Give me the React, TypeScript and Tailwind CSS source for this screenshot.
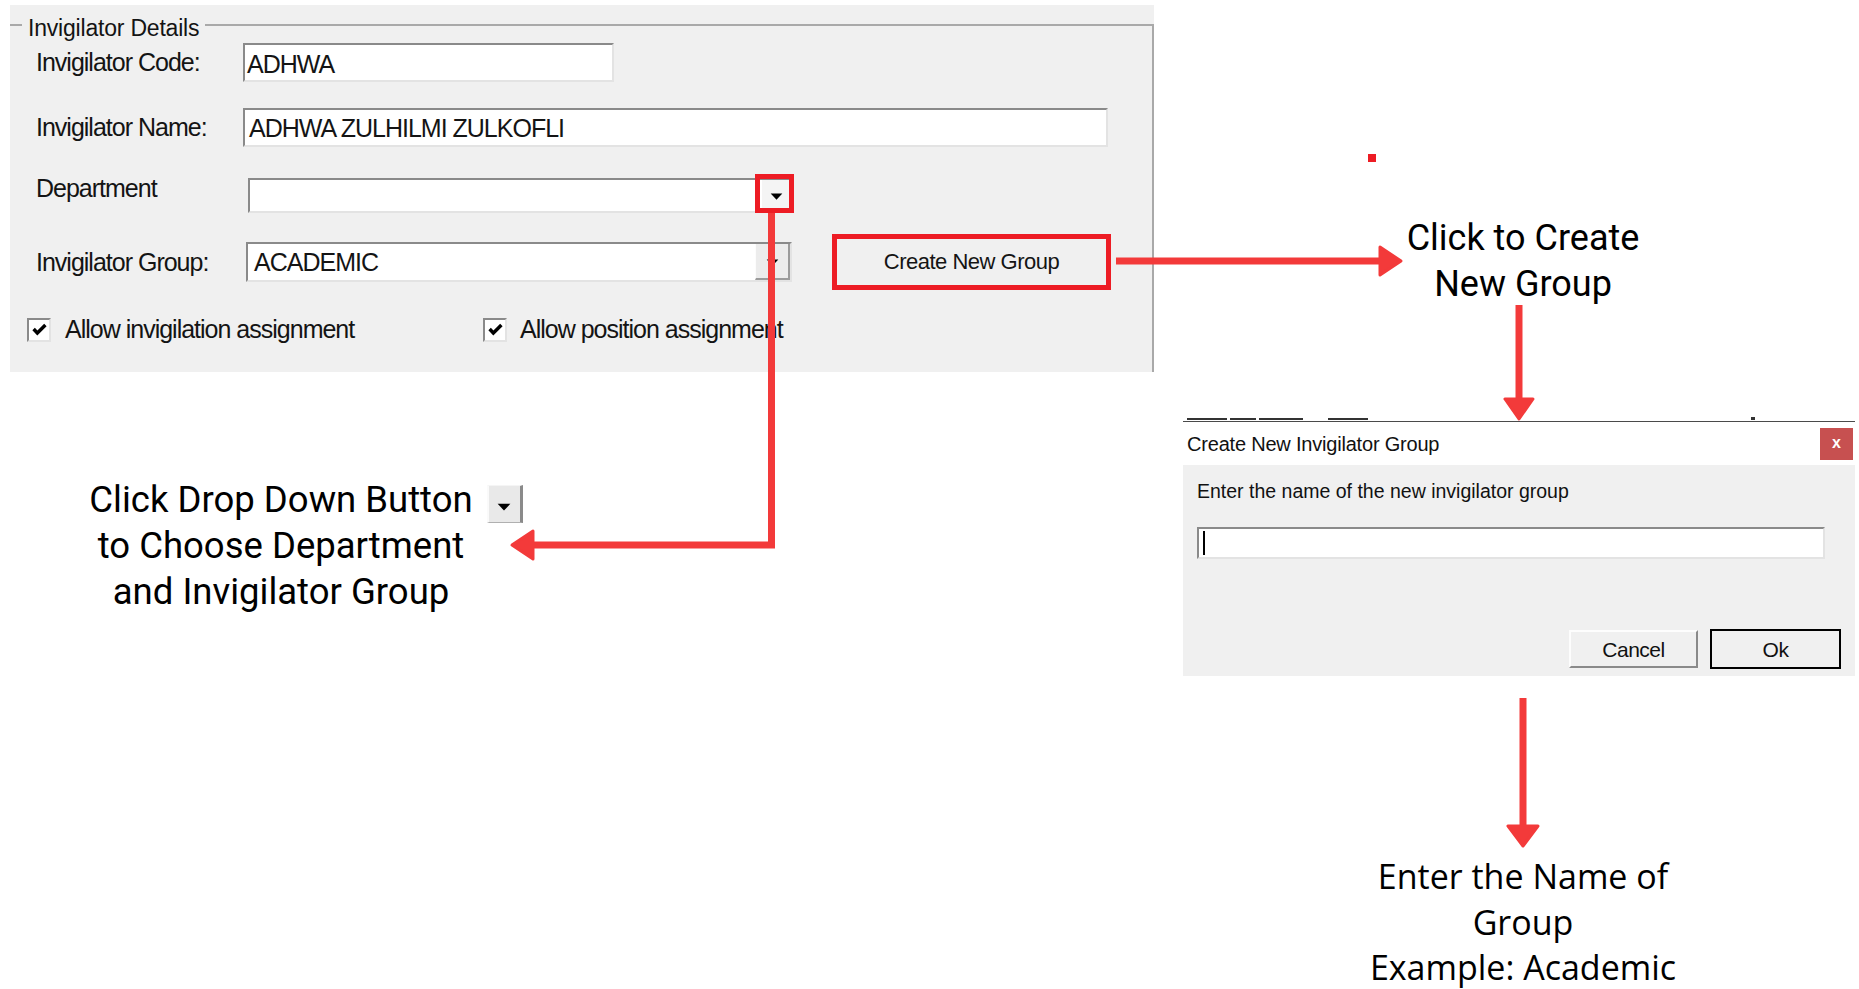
import React from 'react'

const sunken =
  'border-2 border-t-[#8a8a8a] border-l-[#8a8a8a] border-r-[#e3e3e3] border-b-[#e3e3e3] bg-white'

function Caret({ w = 13, h = 7 }: { w?: number; h?: number }): JSX.Element {
  return (
    <svg width={w} height={h} viewBox="0 0 11 6">
      <path d="M0.5 0.5h10L5.5 5.8z" fill="#000" />
    </svg>
  )
}

function CheckBox(): JSX.Element {
  return (
    <div className={`w-[24px] h-[24px] shrink-0 flex items-center justify-center ${sunken}`}>
      <svg width="15" height="13" viewBox="0 0 14 12">
        <path d="M1.5 5.5 L5 9.2 L12.5 1.8" stroke="#000" strokeWidth="3.2" fill="none" />
      </svg>
    </div>
  )
}

function Panel(): JSX.Element {
  const label = 'text-[25px] tracking-[-1px] leading-none'
  return (
    <div className="ml-[10px] mt-[5px] w-[1144px] h-[367px] shrink-0 bg-[#f0f0f0] pt-[19px] text-[#141414]">
      <div className="relative h-[348px] border-t-2 border-r-2 border-[#a9a9a9]">
        <span className="absolute -top-[9px] left-[12px] bg-[#f0f0f0] px-[6px] text-[23px] tracking-[-0.2px] leading-none">
          Invigilator Details
        </span>

        {/* code */}
        <div className="mt-[17px] h-[39px] flex items-center">
          <div className={`w-[233px] pl-[26px] ${label}`}>Invigilator Code:</div>
          <div className={`w-[371px] h-full flex items-center pl-[2px] pt-[3px] ${sunken} ${label}`}>ADHWA</div>
        </div>

        {/* name */}
        <div className="mt-[26px] h-[39px] flex items-center">
          <div className={`w-[233px] pl-[26px] ${label}`}>Invigilator Name:</div>
          <div className={`w-[865px] h-full flex items-center pl-[4px] pt-[1px] ${sunken} ${label}`}>
            ADHWA ZULHILMI ZULKOFLI
          </div>
        </div>

        {/* department */}
        <div className="mt-[31px] h-[35px] flex items-start">
          <div className={`w-[233px] pl-[26px] -mt-[2px] ${label}`}>Department</div>
          <div className={`ml-[5px] w-[544px] h-full flex ${sunken}`}>
            <div className="flex-1" />
            <div className="w-[28px] h-full bg-[#f4f4f4] flex items-center justify-center pt-[2px]">
              <Caret />
            </div>
          </div>
        </div>

        {/* group */}
        <div className="mt-[29px] h-[40px] flex items-center">
          <div className={`w-[233px] pl-[26px] ${label}`}>Invigilator Group:</div>
          <div className={`ml-[3px] w-[546px] h-full flex ${sunken}`}>
            <div className={`flex-1 flex items-center pl-[6px] ${label}`}>ACADEMIC</div>
            <div className="w-[35px] h-full bg-[#ececec] border-l border-l-[#fcfcfc] border-r-2 border-r-[#9b9b9b] border-b-2 border-b-[#9b9b9b] flex items-center justify-center pt-[2px]">
              <Caret />
            </div>
          </div>
          <button className="ml-[40px] w-[279px] h-[56px] shrink-0 border-[5px] border-[#ed1c24] bg-[#f0f0f0] text-[22px] tracking-[-0.5px] leading-none text-[#141414]">
            Create New Group
          </button>
        </div>

        {/* checkboxes */}
        <div className="mt-[35px] h-[25px] flex items-center">
          <div className="ml-[17px] w-[456px] flex items-center">
            <CheckBox />
            <span className={`ml-[14px] ${label}`}>Allow invigilation assignment</span>
          </div>
          <CheckBox />
          <span className={`ml-[13px] ${label}`}>Allow position assignment</span>
        </div>
      </div>
    </div>
  )
}

function Dialog(): JSX.Element {
  return (
    <div className="w-[672px] shrink-0 text-[#111]">
      {/* bottoms of glyphs from the window behind, cut off by the crop */}
      <div className="h-[7px] flex items-end gap-[3px] pl-[4px] pb-[1px]">
        <div className="w-[40px] h-[2px] bg-[#333]" />
        <div className="w-[26px] h-[2px] bg-[#333]" />
        <div className="w-[44px] h-[2px] bg-[#333]" />
        <div className="ml-[22px] w-[40px] h-[2px] bg-[#333]" />
        <div className="ml-[380px] w-[4px] h-[3px] bg-[#333]" />
      </div>
      <div className="h-[44px] border-t border-[#4a4a4a] bg-white flex items-center justify-between pl-[4px] pr-[2px]">
        <span className="text-[20px] tracking-[-0.2px] leading-none">Create New Invigilator Group</span>
        <div className="w-[33px] h-[32px] bg-[#c75050] flex items-center justify-center text-white font-bold text-[16px] leading-none pb-[2px]">
          x
        </div>
      </div>
      <div className="h-[211px] bg-[#f0f0f0] px-[14px] pt-[17px] flex flex-col">
        <p className="text-[19.5px] leading-none">Enter the name of the new invigilator group</p>
        <div className={`mt-[25px] w-[628px] h-[32px] flex items-center pl-[4px] ${sunken}`}>
          <div className="w-[2px] h-[24px] bg-black" />
        </div>
        <div className="mt-auto mb-[7px] flex items-center justify-end gap-[12px]">
          <button className="w-[129px] h-[38px] border-2 border-t-[#fdfdfd] border-l-[#fdfdfd] border-r-[#8a8a8a] border-b-[#8a8a8a] bg-[#f0f0f0] text-[21px] tracking-[-0.5px] leading-none">
            Cancel
          </button>
          <button className="w-[131px] h-[40px] border-2 border-black bg-[#f0f0f0] text-[21px] tracking-[-0.5px] leading-none">
            Ok
          </button>
        </div>
      </div>
    </div>
  )
}

function Arrows(): JSX.Element {
  const red = '#f33a3a'
  return (
    <svg className="absolute inset-0 pointer-events-none" width="1859" height="989" viewBox="0 0 1859 989">
      <rect x="757.5" y="176.5" width="34" height="34" fill="none" stroke="#ed1c24" strokeWidth="5" />
      <path d="M771.5 213 V545 H532" stroke={red} strokeWidth="7" fill="none" />
      <path d="M512 545 L533 531 L533 559 Z" fill={red} stroke={red} strokeWidth="3" strokeLinejoin="round" />
      <path d="M1116 261 H1382" stroke={red} strokeWidth="7" />
      <path d="M1401 261 L1380 247 L1380 275 Z" fill={red} stroke={red} strokeWidth="3" strokeLinejoin="round" />
      <path d="M1519 305 V401" stroke={red} strokeWidth="7" />
      <path d="M1519 419 L1505 399 L1533 399 Z" fill={red} stroke={red} strokeWidth="3" strokeLinejoin="round" />
      <path d="M1523 698 V828" stroke={red} strokeWidth="7" />
      <path d="M1523 846 L1508 826 L1538 826 Z" fill={red} stroke={red} strokeWidth="3" strokeLinejoin="round" />
    </svg>
  )
}

export default function App(): JSX.Element {
  return (
    <div className="relative w-[1859px] h-[989px] bg-white overflow-hidden font-['Liberation_Sans',Arial,sans-serif]">
      <div className="flex items-start">
        <Panel />
        <div className="flex flex-col">
          <div className="ml-[214px] mt-[154px] w-[8px] h-[8px] bg-[#ed1c24]" />
          <div className="ml-[168px] mt-[53px] w-[402px] text-center font-['Roboto',sans-serif] text-[36px] leading-[46px] text-black">
            Click to Create
            <br />
            New Group
          </div>
        </div>
      </div>

      <div className="mt-[42px] flex items-start">
        <div className="w-[1183px] shrink-0">
          <div className="ml-[81px] mt-[63px] w-[400px] text-center font-['Roboto',sans-serif] text-[36.5px] leading-[46px] text-black">
            <span className="relative">
              Click Drop Down Button
              <span className="absolute left-full ml-[14px] top-[7px] w-[36px] h-[38px] bg-[#e9e9e9] border-l-2 border-l-[#fafafa] border-t border-t-[#f5f5f5] border-r-[3px] border-r-[#8a8a8a] border-b border-b-[#b0b0b0] flex items-center justify-center pt-[6px]">
                <Caret w={14} h={8} />
              </span>
            </span>
            <br />
            to Choose Department
            <br />
            and Invigilator Group
          </div>
        </div>
        <Dialog />
      </div>

      <div className="ml-[1273px] mt-[178px] w-[500px] text-center font-['Open_Sans',sans-serif] text-[34px] leading-[45.5px] text-black">
        Enter the Name of
        <br />
        Group
        <br />
        Example: Academic
      </div>

      <Arrows />
    </div>
  )
}
